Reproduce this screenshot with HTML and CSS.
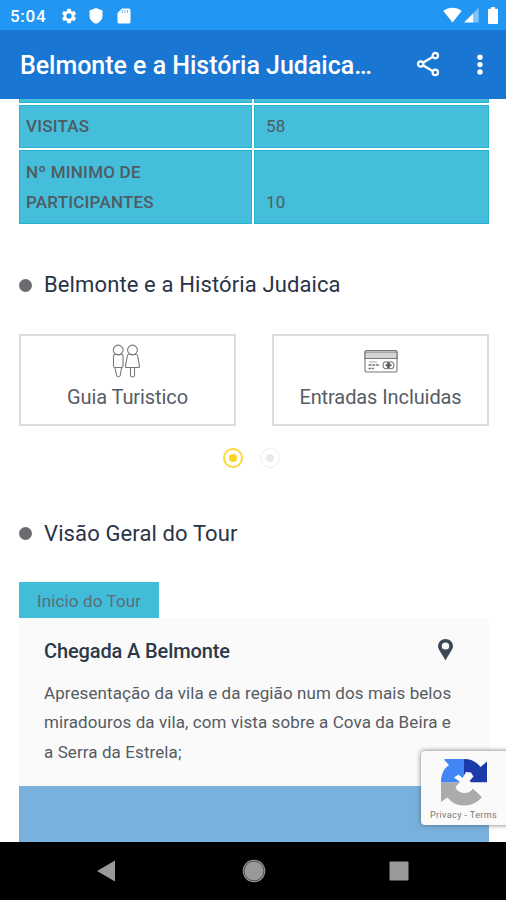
FILE: index.html
```html
<!DOCTYPE html>
<html lang="pt">
<head>
<meta charset="utf-8">
<title>Belmonte e a História Judaica</title>
<link rel="stylesheet" href="styles.css">
</head>
<body>
<div class="phone">
  <header class="status">
    <span class="clock">5:04</span>
    <svg class="s-gear" width="18" height="18" viewBox="0 0 24 24"><path fill="#fff" d="M19.14 12.94c.04-.3.06-.61.06-.94s-.02-.64-.07-.94l2.03-1.58a.49.49 0 0 0 .12-.61l-1.92-3.32a.49.49 0 0 0-.59-.22l-2.39.96a7 7 0 0 0-1.62-.94l-.36-2.54a.48.48 0 0 0-.48-.41h-3.84a.47.47 0 0 0-.47.41l-.36 2.54c-.59.24-1.13.57-1.62.94l-2.39-.96a.48.48 0 0 0-.59.22L2.74 8.87a.47.47 0 0 0 .12.61l2.03 1.58a6 6 0 0 0 0 1.88l-2.03 1.58a.49.49 0 0 0-.12.61l1.92 3.32c.12.22.37.29.59.22l2.39-.96c.5.38 1.03.7 1.62.94l.36 2.54c.05.24.24.41.48.41h3.84c.24 0 .44-.17.47-.41l.36-2.54a7 7 0 0 0 1.62-.94l2.39.96c.22.08.47 0 .59-.22l1.92-3.32a.47.47 0 0 0-.12-.61zM12 15.6a3.6 3.6 0 1 1 0-7.2 3.6 3.6 0 0 1 0 7.2z"/></svg>
    <svg class="s-shield" width="14" height="16" viewBox="0 0 14 16"><path fill="#fff" d="M7 0l6.500 2.500v5.200c0 3.700-2.600 6.500-6.500 8.100C3.100 14.200.5 11.400.5 7.700V2.500z"/></svg>
    <svg class="s-card" width="14" height="16" viewBox="0 0 14 16"><path fill="#fff" d="M5 .5h7A1.500 1.500 0 0 1 13.500 2v12A1.500 1.500 0 0 1 12 15.500H2A1.500 1.500 0 0 1 .5 14V5z"/><path stroke="#2196f3" stroke-opacity=".6" stroke-width="1.100" d="M5.500 2v3M8 2v3M10.500 2v3"/></svg>
    <div class="signals">
      <svg width="19" height="16" viewBox="0 0 19 16"><path fill="#fff" d="M9.500 15.500L.4 3.900C5.500-.4 13.500-.4 18.600 3.900z"/></svg>
      <svg width="15" height="16" viewBox="0 0 15 16"><path fill="#fff" d="M0 15.500L9.500 6v9.500z"/><path fill="#80c3f9" d="M9.500 6L14.700.8v14.700H9.500z"/></svg>
      <svg class="battery" width="10" height="17" viewBox="0 0 10 17"><path fill="#fff" d="M3 0h4v1.800h2a1 1 0 0 1 1 1V16a1 1 0 0 1-1 1H1a1 1 0 0 1-1-1V2.800a1 1 0 0 1 1-1h2z"/></svg>
    </div>
  </header>
  <nav class="appbar">
    <h1 class="title">Belmonte e a História Judaica…</h1>
    <svg class="share" width="26" height="26" viewBox="0 0 26 26" fill="none" stroke="#fff" stroke-width="2.200"><path d="M7.300 11.500L16.500 6M7.300 14.500L16.500 20"/><circle cx="4.700" cy="13" r="2.700"/><circle cx="19.300" cy="4.600" r="2.700"/><circle cx="19.300" cy="21.400" r="2.700"/></svg>
    <svg class="more" width="6" height="22" viewBox="0 0 6 22" fill="#fff"><circle cx="3" cy="3.200" r="2.700"/><circle cx="3" cy="10.600" r="2.700"/><circle cx="3" cy="18" r="2.700"/></svg>
  </nav>
  <main class="content">
    <div class="facts">
      <div class="cell stub"></div><div class="cell stub"></div>
      <div class="cell key"><span>VISITAS</span></div><div class="cell value">58</div>
      <div class="cell key"><span>Nº MINIMO DE</span><span>PARTICIPANTES</span></div><div class="cell value">10</div>
    </div>
    <h2 class="section"><i class="bullet"></i><span>Belmonte e a História Judaica</span></h2>
    <div class="cards">
      <div class="card guide">
        <svg width="30" height="34" viewBox="0 0 30 34" fill="none" stroke="#777" stroke-width="1.100"><circle cx="7.200" cy="6" r="4.900"/><path d="M3 10.500h8.500M2.500 12q0-1.500 1.500-1.500h6.500q1.500 0 1.500 1.500v10q0 1.500-1.500 1.500H4q-1.500 0-1.500-1.500zM4 24l1.500 7q.3 2 2 2 1.600 0 1.800-2L10.500 24"/><circle cx="21.500" cy="6" r="4.900"/><path d="M17.200 10.500h8.600M17.500 10.500h8q1 0 1.200 1.500l1.800 10q.2 1.500-1.200 1.500H15.700q-1.400 0-1.200-1.500l1.800-10q.2-1.500 1.200-1.500zM19.500 24v7.500q0 1.500 2 1.500t2-1.500V24"/></svg>
        <span>Guia Turistico</span>
      </div>
      <div class="card">
        <svg width="34" height="34" viewBox="0 0 34 34" fill="none" stroke="#777" stroke-width="1.100"><rect x="1" y="6.500" width="32" height="21.500" rx="1.500"/><path fill="#d5d5d5" d="M1 8h32v6.500H1z"/><path d="M5 18h8" stroke="#aaa"/><path d="M4.500 21h10.500M4.500 24.500h5.500" stroke-width="1.500" stroke-dasharray="3 .7"/><circle cx="22.500" cy="21.300" r="3.500"/><circle cx="26.500" cy="21.300" r="3.500"/><path d="M21.500 21.300h6M24.500 18.500v5.500" stroke="#555" stroke-width="1.400"/></svg>
        <span>Entradas Incluidas</span>
      </div>
    </div>
    <div class="pager"><i class="dot on"></i><i class="dot"></i></div>
    <h2 class="section second"><i class="bullet"></i><span>Visão Geral do Tour</span></h2>
    <div class="tab"><span>Inicio do Tour</span></div>
    <section class="panel">
      <div class="panel-head">
        <h3>Chegada A Belmonte</h3>
        <svg width="15" height="22" viewBox="0 0 14 22" preserveAspectRatio="none"><path fill="#3b4855" fill-rule="evenodd" d="M7 0a7 7 0 0 1 7 7c0 3.500-4.500 9-7 14.500C4.500 16 0 10.500 0 7a7 7 0 0 1 7-7zm0 3.400a3.500 3.500 0 1 0 0 7 3.500 3.500 0 0 0 0-7z"/></svg>
      </div>
      <p class="desc"><span>Apresentação da vila e da região num dos mais belos</span><span>miradouros da vila, com vista sobre a Cova da Beira e</span><span>a Serra da Estrela;</span></p>
    </section>
    <div class="photo"></div>
  </main>
  <aside class="captcha">
    <svg width="46" height="47" viewBox="0 0 46 47"><path fill="#4285f4" d="M23 0v23.500H0C0 15 3 9.500 8 6L3.500 1.200V0z"/><path fill="#1c3aa9" d="M23 0c7.500 0 13 3.200 16.500 8L46 2.500v21H23z"/><path fill="#ababab" d="M0 23.500h23l9 6L41 38c-4.500 5.500-10.500 8.500-18 8.500-7 0-12.500-3-16.500-8L0 43z"/><path fill="#fafafa" d="M13 18.500l4.500-3 4 3.500 3.500-6 5 .5 2.500 4-4 4.500 2 1.500H46V37l-5 1-9-8.500c-2.500 3.500-5 4.500-8.500 4.500-4.500 0-8-2.500-9-6l4.500-5z"/></svg>
    <span>Privacy - Terms</span>
  </aside>
  <footer class="navbar">
    <svg width="18" height="22" viewBox="0 0 18 22"><path fill="#999" d="M18 .5v21L0 11z"/></svg>
    <svg width="24" height="24" viewBox="0 0 24 24"><circle cx="12" cy="12" r="11.300" fill="#999"/><circle cx="12" cy="12" r="9.900" fill="none" stroke="#444" stroke-width=".9"/></svg>
    <svg width="20" height="20" viewBox="0 0 20 20"><rect x=".5" y=".5" width="19" height="19" rx="1" fill="#999"/></svg>
  </footer>
</div>
</body>
</html>
```

FILE: styles.css
```css
* { box-sizing: border-box; }
body { margin: 0; font-family: Roboto, "Liberation Sans", sans-serif; background: #fff; }
h1, h2, h3, p { margin: 0; font-weight: 400; }
svg { display: block; flex: none; }
span, h1, h3 { white-space: nowrap; }
.phone { position: relative; width: 506px; height: 900px; overflow: hidden; display: flex; flex-direction: column; }

.status { height: 30px; flex: none; background: #2196f3; display: flex; align-items: center; padding-left: 10px; color: #fff; }
.clock { font-size: 17px; font-weight: 500; width: 50px; line-height: 30px; padding-top: 1px; letter-spacing: .7px; }
.s-gear { margin-top: 1px; }
.s-shield { margin-left: 11px; margin-top: 1px; }
.s-card { margin-left: 14px; margin-top: 1px; }
.signals { margin-left: auto; display: flex; align-items: center; gap: 2px; padding-right: 8px; }
.battery { margin-left: 7px; }

.appbar { height: 68.5px; flex: none; background: #1976d2; display: flex; align-items: center; padding: 0 23px 0 20px; color: #fff; }
.title { font-size: 25px; font-weight: 500; line-height: 32px; padding-top: 3px; letter-spacing: -.03px; }
.share { margin-left: auto; margin-right: 35px; }
.more { margin-top: 1px; }

.content { flex: none; height: 743.5px; overflow: hidden; padding: 0 17px 0 19px; }
.facts { display: grid; grid-template-columns: 233px 235px; grid-template-rows: 4px 43.5px 74px; column-gap: 2px; row-gap: 2px; color: #505b62; font-size: 17px; line-height: 30px; }
.cell { background: #44bedb; border: 1px solid #27b3cf; display: flex; flex-direction: column; justify-content: center; }
.stub { border-top: 0; }
.key { font-weight: 500; padding-left: 6px; letter-spacing: .22px; }
.value { padding: 0 0 6px 11px; justify-content: flex-end; letter-spacing: .2px; }

.section { display: flex; align-items: center; gap: 12px; height: 32px; margin-top: 45.5px; color: #2b3347; font-size: 22px; letter-spacing: .12px; }
.bullet { width: 13px; height: 13px; border-radius: 50%; background: #696b6e; }
.section span { padding-bottom: 2px; }
.second span { padding-bottom: 0; }
.cards { display: flex; gap: 36px; margin-top: 32px; width: 470px; }
.card { flex: 1; height: 92px; border: 2px solid #dcdcdc; display: flex; flex-direction: column; align-items: center; padding-top: 8px; font-size: 20px; line-height: 38px; letter-spacing: -.09px; color: #565d66; }
.guide svg { margin-right: 3px; }
.pager { display: flex; justify-content: center; gap: 17px; margin-top: 22px; padding-right: 6px; }
.dot { width: 20px; height: 20px; border: 1.5px solid #eee; border-radius: 50%; display: grid; place-items: center; }
.dot::after { content: ""; width: 8px; height: 8px; border-radius: 50%; background: #eaeaea; }
.on { border-color: #fbd738; border-width: 2px; }
.on::after { background: #fcd21c; }
.second { margin-top: 50px; }

.tab { width: 140px; height: 36px; margin-top: 32px; background: #41bcd9; color: #5d6d76; font-size: 17px; line-height: 38px; letter-spacing: .12px; padding-left: 18px; }
.panel { width: 470px; height: 168px; background: #fafafa; padding: 18px 36px 0 25px; border-top-right-radius: 4px; }
.panel-head { display: flex; justify-content: space-between; align-items: center; height: 30px; color: #2c3948; }
.panel-head h3 { font-size: 20px; font-weight: 500; letter-spacing: -.12px; }
.panel-head svg { margin-top: -2px; }
.desc { margin-top: 13px; display: flex; flex-direction: column; align-items: flex-start; color: #565a63; font-size: 17px; line-height: 29.5px; letter-spacing: .09px; }
.photo { width: 470px; height: 57px; background: #78b1de; }

.captcha { position: absolute; left: 421px; top: 751px; width: 90px; height: 74px; border-radius: 4px; background: #fafafa; box-shadow: 0 0 5px rgba(80, 80, 80, .8); padding: 8px 0 0 20px; }
.captcha span { display: block; margin: 3px 0 0 -11px; font-size: 9px; line-height: 12px; letter-spacing: .4px; color: #777; }

.navbar { flex: none; height: 58px; background: #000; display: flex; align-items: center; padding-left: 97px; }
.navbar svg:nth-child(2) { margin-left: 127px; }
.navbar svg:nth-child(3) { margin-left: 123px; }
```
